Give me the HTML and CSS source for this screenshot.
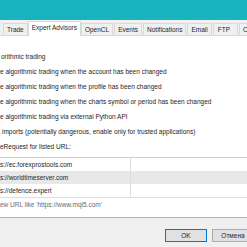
FILE: index.html
```html
<!DOCTYPE html>
<html lang="en">
<head>
<meta charset="utf-8">
<title>Options - Expert Advisors</title>
<link rel="stylesheet" href="styles.css">
</head>
<body>
<div class="header"></div>
<div class="dialog">
  <div class="tabs">
    <div class="tab">Trade</div>
    <div class="tab active">Expert Advisors</div>
    <div class="tab">OpenCL</div>
    <div class="tab">Events</div>
    <div class="tab">Notifications</div>
    <div class="tab">Email</div>
    <div class="tab wide">FTP</div>
    <div class="tab">Community</div>
  </div>
  <div class="panel">
    <div class="opt top">orithmic trading</div>
    <div class="opt sub">e algorithmic trading when the account has been changed</div>
    <div class="opt sub">e algorithmic trading when the profile has been changed</div>
    <div class="opt sub">e algorithmic trading when the charts symbol or period has been changed</div>
    <div class="opt sub">e algorithmic trading via external Python API</div>
    <div class="opt dll">imports (potentially dangerous, enable only for trusted applications)</div>
    <div class="opt web">eRequest for listed URL:</div>
    <div class="urls">
      <div class="row"><div class="cell url">s://ec.forexprostools.com</div><div class="cell"></div></div>
      <div class="row alt"><div class="cell url">s://worldtimeserver.com</div><div class="cell"></div></div>
      <div class="row"><div class="cell url">s://defence.expert</div><div class="cell"></div></div>
      <div class="row add">ew URL like 'https://www.mql5.com'</div>
    </div>
  </div>
  <div class="footer">
    <div class="btn default">OK</div>
    <div class="btn">Отмена</div>
  </div>
</div>
</body>
</html>
```
FILE: styles.css
```css
html, body {
  margin: 0;
  padding: 0;
}
body {
  width: 247px;
  height: 247px;
  overflow: hidden;
  font-family: "Liberation Sans", Arial, sans-serif;
  font-size: 6.5px;
  color: #1e1e1e;
  background: #f0f0f0;
}
.header {
  height: 20px;
  background: #19b3be;
}
.dialog {
  background: #f0f0f0;
}
.tabs {
  display: flex;
  align-items: flex-end;
  height: 15px;
  padding-left: 3px;
  border-bottom: 1px solid #d9d9d9;
  white-space: nowrap;
}
.tab {
  height: 11px;
  line-height: 11px;
  padding: 0 3px;
  border: 1px solid #d9d9d9;
  border-bottom: none;
  background: #f0f0f0;
  margin-right: 1px;
  flex: none;
}
.tab.active {
  height: 14px;
  line-height: 12px;
  background: #fff;
  margin-bottom: -1px;
  margin-right: 0;
  margin-left: -1px;
}
.tab.wide {
  padding: 0 7px 0 4px;
}
.panel {
  background: #fff;
  padding-top: 13px;
  height: 168px;
  box-sizing: content-box;
}
.opt {
  height: 15px;
  line-height: 15px;
  white-space: nowrap;
}
.opt.top { padding-left: 1px; }
.opt.dll { padding-left: 2px; }
.urls {
  margin-top: 3px;
  height: 59px;
  border-top: 1px solid #ccd0d6;
  border-bottom: 1px solid #b4b4b4;
  background: #fff;
}
.row {
  display: flex;
  height: 13px;
  line-height: 13px;
  white-space: nowrap;
}
.row.alt {
  background: #e8e8e8;
}
.cell {
  flex: 1;
}
.cell.url {
  flex: none;
  width: 130px;
  border-right: 1px solid #dedede;
}
.row.add {
  border-top: 1px solid #dedede;
  color: #6a6a6a;
}
.footer {
  display: flex;
  gap: 5px;
  padding: 12px 0 0 165px;
  height: 17px;
}
.btn {
  flex: none;
  width: 40px;
  height: 11px;
  line-height: 11px;
  text-align: center;
  background: #e1e1e1;
  border: 1px solid #adadad;
}
.btn.default {
  border-color: #0078d7;
}
```
